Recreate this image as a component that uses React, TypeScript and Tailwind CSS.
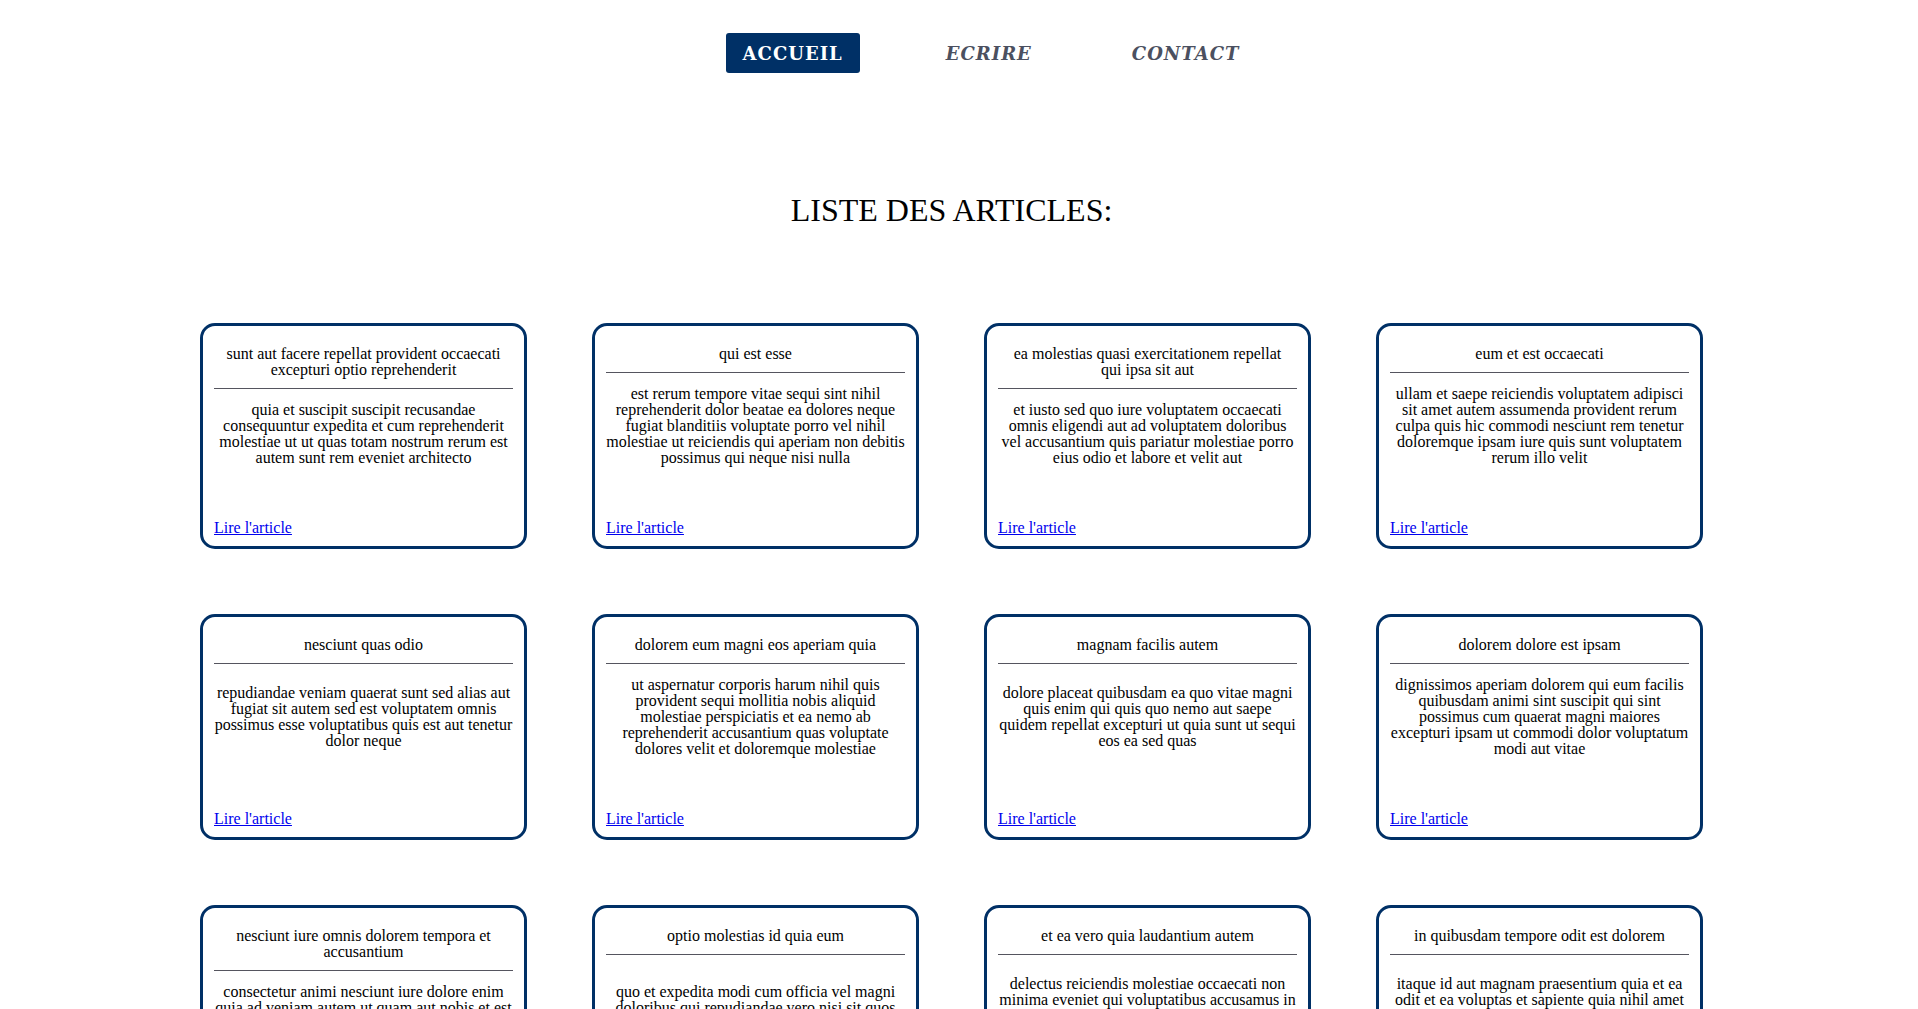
import React from "react";

const posts = [
  { t: "sunt aut facere repellat provident occaecati excepturi optio reprehenderit", b: "quia et suscipit suscipit recusandae consequuntur expedita et cum reprehenderit molestiae ut ut quas totam nostrum rerum est autem sunt rem eveniet architecto" },
  { t: "qui est esse", b: "est rerum tempore vitae sequi sint nihil reprehenderit dolor beatae ea dolores neque fugiat blanditiis voluptate porro vel nihil molestiae ut reiciendis qui aperiam non debitis possimus qui neque nisi nulla" },
  { t: "ea molestias quasi exercitationem repellat qui ipsa sit aut", b: "et iusto sed quo iure voluptatem occaecati omnis eligendi aut ad voluptatem doloribus vel accusantium quis pariatur molestiae porro eius odio et labore et velit aut" },
  { t: "eum et est occaecati", b: "ullam et saepe reiciendis voluptatem adipisci sit amet autem assumenda provident rerum culpa quis hic commodi nesciunt rem tenetur doloremque ipsam iure quis sunt voluptatem rerum illo velit" },
  { t: "nesciunt quas odio", b: "repudiandae veniam quaerat sunt sed alias aut fugiat sit autem sed est voluptatem omnis possimus esse voluptatibus quis est aut tenetur dolor neque" },
  { t: "dolorem eum magni eos aperiam quia", b: "ut aspernatur corporis harum nihil quis provident sequi mollitia nobis aliquid molestiae perspiciatis et ea nemo ab reprehenderit accusantium quas voluptate dolores velit et doloremque molestiae" },
  { t: "magnam facilis autem", b: "dolore placeat quibusdam ea quo vitae magni quis enim qui quis quo nemo aut saepe quidem repellat excepturi ut quia sunt ut sequi eos ea sed quas" },
  { t: "dolorem dolore est ipsam", b: "dignissimos aperiam dolorem qui eum facilis quibusdam animi sint suscipit qui sint possimus cum quaerat magni maiores excepturi ipsam ut commodi dolor voluptatum modi aut vitae" },
  { t: "nesciunt iure omnis dolorem tempora et accusantium", b: "consectetur animi nesciunt iure dolore enim quia ad veniam autem ut quam aut nobis et est aut quod aut provident voluptas autem voluptas" },
  { t: "optio molestias id quia eum", b: "quo et expedita modi cum officia vel magni doloribus qui repudiandae vero nisi sit quos veniam quod sed accusamus veritatis error" },
  { t: "et ea vero quia laudantium autem", b: "delectus reiciendis molestiae occaecati non minima eveniet qui voluptatibus accusamus in eum beatae sit vel qui neque voluptates ut commodi qui incidunt ut animi commodi" },
  { t: "in quibusdam tempore odit est dolorem", b: "itaque id aut magnam praesentium quia et ea odit et ea voluptas et sapiente quia nihil amet occaecati quia id voluptatem incidunt ea est distinctio odio" },
];

function Card({ t, b }: { t: string; b: string }) {
  return (
    <div className="flex h-[226px] w-[327px] flex-col rounded-[15px] border-[3px] border-[#003066] bg-white px-[11px] pb-[10px] pt-[20px] text-[16px] text-black">
      <h2 className="px-[5px] text-center leading-[16px]">{t}</h2>
      <div className="mt-[10px] h-px w-full bg-[#55555f]" />
      <div className="flex flex-1 items-center justify-center">
        <p className="text-center leading-[16px]">{b}</p>
      </div>
      <a href="#" className="mt-[42px] self-start leading-[16px] text-[#0000ee] underline">
        Lire l'article
      </a>
    </div>
  );
}

export default function App() {
  return (
    <div className="min-h-screen bg-white pr-[15px]" style={{ fontFamily: '"Liberation Serif", serif' }}>
      <nav className="flex items-center justify-center gap-[72px] pl-[76px] pt-[33px]" style={{ fontFamily: '"DejaVu Serif", serif' }}>
        <a href="#" className="flex h-[40px] items-center rounded-[3px] bg-[#003066] px-[17px] pt-[1px] text-[18px] font-bold tracking-[1px] text-white">
          ACCUEIL
        </a>
        <a href="#" className="flex h-[40px] items-center px-[14px] pt-[1px] text-[18px] font-bold italic tracking-[1px] text-[#4b5060]">
          ECRIRE
        </a>
        <a href="#" className="flex h-[40px] items-center px-[14px] pt-[1px] text-[18px] font-bold italic tracking-[1px] text-[#4b5060]">
          CONTACT
        </a>
      </nav>
      <h1 className="mt-[119px] text-center text-[32px] leading-[36px] text-black">LISTE DES ARTICLES:</h1>
      <div className="mx-auto mt-[95px] grid w-[1503px] grid-cols-4 gap-x-[65px] gap-y-[65px] pb-[40px]">
        {posts.map((p, i) => (
          <Card key={i} t={p.t} b={p.b} />
        ))}
      </div>
    </div>
  );
}
